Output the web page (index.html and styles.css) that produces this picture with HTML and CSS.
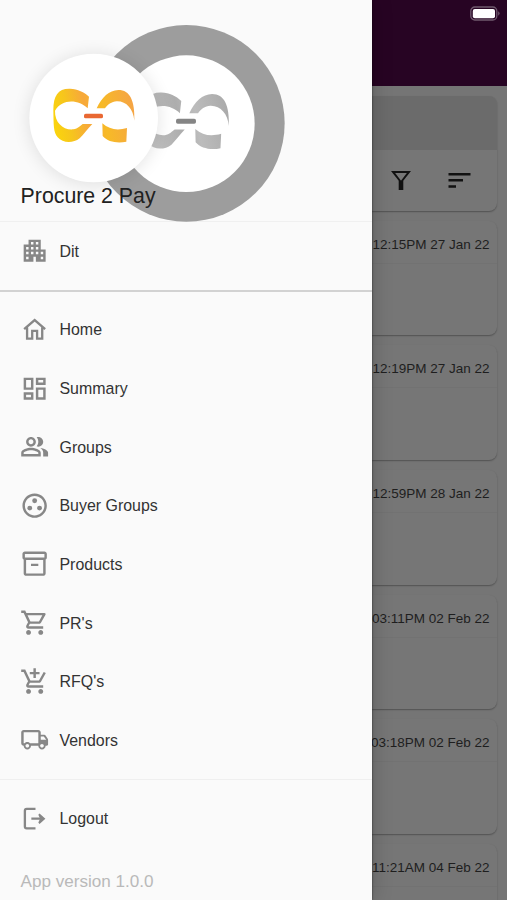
FILE: index.html
```html
<!DOCTYPE html>
<html lang="en">
<head>
<meta charset="utf-8">
<title>Procure 2 Pay</title>
<link rel="stylesheet" href="styles.css">
</head>
<body>
<div class="app">
  <aside class="drawer">
    <header class="brand">
      <svg class="brand-art" width="300" height="222" viewBox="0 0 900 666">
        <defs>
          <linearGradient id="gold" gradientUnits="userSpaceOnUse" x1="160" y1="380" x2="405" y2="330">
            <stop offset="0" stop-color="#fbd50c"/><stop offset=".2" stop-color="#f6c51d"/><stop offset=".42" stop-color="#f7a83b"/><stop offset=".62" stop-color="#f7ba27"/><stop offset="1" stop-color="#f5a445"/>
          </linearGradient>
          <linearGradient id="silver" gradientUnits="userSpaceOnUse" x1="160" y1="380" x2="405" y2="330">
            <stop offset="0" stop-color="#c6c6c6"/><stop offset=".42" stop-color="#adadad"/><stop offset=".62" stop-color="#bcbcbc"/><stop offset="1" stop-color="#aaa"/>
          </linearGradient>
          <filter id="soft" x="-40%" y="-40%" width="180%" height="180%"><feGaussianBlur stdDeviation="27"/></filter>
          <g id="ribbons">
            <path d="M160 330C160 287 174 265 210 266C234 267 252 276 267 290L263 325C237 299 187 294 165 332C164 368 190 391 220 388C234 386 241 377 248 372H277C261 389 251 403 239 415C219 431 188 430 173 412C160 397 161 375 160 330Z"/>
            <path d="M290 325C306 291 327 271 355 270C390 270 405 302 403 362C400 327 379 303 350 304C335 305 322 314 315 325Z"/>
            <path d="M307 370C328 389 353 392 381 384L379 425C353 431 323 426 308 408Z"/>
          </g>
        </defs>
        <circle cx="559" cy="370" r="295" fill="#9d9d9d"/>
        <circle cx="559" cy="371" r="205" fill="#fff"/>
        <g transform="translate(558 363) scale(1.05) translate(-280.5 -347.5)">
          <use href="#ribbons" fill="url(#silver)"/>
          <rect x="252" y="341" width="57" height="14" rx="5" fill="#858585"/>
        </g>
        <circle cx="281" cy="358" r="194" fill="#000" opacity=".11" filter="url(#soft)"/>
        <circle cx="281" cy="354" r="193" fill="#fff"/>
        <use href="#ribbons" fill="url(#gold)"/>
        <rect x="252" y="341" width="57" height="14" rx="5" fill="#e96832"/>
      </svg>
      <h1 class="brand-name">Procure 2 Pay</h1>
    </header>
    <div class="company">
      <a class="item"><svg class="icon" viewBox="0 0 24 24"><path d="M17 11V3H7v4H3v14h8v-4h2v4h8V11h-4zM7 19H5v-2h2v2zm0-4H5v-2h2v2zm0-4H5V9h2v2zm4 4H9v-2h2v2zm0-4H9V9h2v2zm0-4H9V5h2v2zm4 8h-2v-2h2v2zm0-4h-2V9h2v2zm0-4h-2V5h2v2zm4 12h-2v-2h2v2zm0-4h-2v-2h2v2z"/></svg><span>Dit</span></a>
    </div>
    <nav class="menu">
      <a class="item"><svg class="icon line" viewBox="0 0 24 24"><path d="M3.400 11.600L12 4.200l8.600 7.400M5.800 10.200V19.300H10V13H14V19.300H18.200V10.200"/></svg><span>Home</span></a>
      <a class="item"><svg class="icon" viewBox="0 0 24 24"><path d="M19 5v2h-4V5h4M9 5v6H5V5h4m10 8v6h-4v-6h4M9 17v2H5v-2h4M21 3h-8v6h8V3zM11 3H3v10h8V3zm10 8h-8v10h8V11zm-10 4H3v6h8v-6z"/></svg><span>Summary</span></a>
      <a class="item"><svg class="icon" viewBox="0 0 24 24"><path d="M9 12c2.210 0 4-1.790 4-4s-1.790-4-4-4-4 1.790-4 4 1.790 4 4 4zm0-6c1.100 0 2 .9 2 2s-.9 2-2 2-2-.9-2-2 .9-2 2-2zM9 13c-2.670 0-8 1.340-8 4v3h16v-3c0-2.660-5.330-4-8-4zm6 5H3v-.99c.2-.72 3.300-2.010 6-2.010s5.800 1.290 6 2v1zM15 12c2.210 0 4-1.790 4-4s-1.790-4-4-4c-.47 0-.91.1-1.330.24C14.500 5.270 15 6.580 15 8s-.5 2.730-1.330 3.760c.42.14.86.24 1.330.24zM16.670 13.130C18.040 14.060 19 15.320 19 17v3h4v-3c0-2.180-3.570-3.470-6.330-3.870z"/></svg><span>Groups</span></a>
      <a class="item"><svg class="icon" viewBox="0 0 24 24"><path d="M12 2C6.480 2 2 6.480 2 12s4.480 10 10 10 10-4.480 10-10S17.520 2 12 2zm0 18c-4.410 0-8-3.590-8-8s3.590-8 8-8 8 3.590 8 8-3.590 8-8 8z"/><circle cx="8" cy="14" r="2"/><circle cx="12" cy="8" r="2"/><circle cx="16" cy="14" r="2"/></svg><span>Buyer Groups</span></a>
      <a class="item"><svg class="icon" viewBox="0 0 24 24"><path d="M20 2H4c-1 0-2 .9-2 2v3.010c0 .72.43 1.340 1 1.690V20c0 1.100 1.100 2 2 2h14c.9 0 2-.9 2-2V8.700c.57-.35 1-.97 1-1.690V4c0-1.100-1-2-2-2zm-1 18H5V9h14v11zm1-13H4V4h16v3zM9 12h6v2H9z"/></svg><span>Products</span></a>
      <a class="item"><svg class="icon" viewBox="0 0 24 24"><path d="M15.550 13c.75 0 1.410-.41 1.750-1.030l3.580-6.490c.37-.66-.11-1.480-.87-1.480H5.210l-.94-2H1v2h2l3.600 7.590-1.350 2.440C4.520 15.370 5.480 17 7 17h12v-2H7l1.100-2h7.450zM6.160 6h12.150l-2.760 5H8.530L6.160 6zM7 18c-1.100 0-1.990.9-1.990 2S5.900 22 7 22s2-.9 2-2-.9-2-2-2zm10 0c-1.100 0-1.990.9-1.990 2s.89 2 1.990 2 2-.9 2-2-.9-2-2-2z"/></svg><span>PR's</span></a>
      <a class="item"><svg class="icon" viewBox="0 0 24 24"><path d="M11 9h2V6h3V4h-3V1h-2v3H8v2h3v3zm-4 9c-1.100 0-1.990.9-1.990 2S5.900 22 7 22s2-.9 2-2-.9-2-2-2zm10 0c-1.100 0-1.990.9-1.990 2s.89 2 1.990 2 2-.9 2-2-.9-2-2-2zm-8.900-5h7.450c.75 0 1.410-.41 1.750-1.030l3.860-7.010L19.420 4l-3.870 7H8.530L4.270 2H1v2h2l3.600 7.590-1.350 2.440C4.520 15.370 5.480 17 7 17h12v-2H7l1.100-2z"/></svg><span>RFQ's</span></a>
      <a class="item"><svg class="icon" viewBox="0 0 24 24"><path fill-rule="evenodd" d="M20 8h-3V6c0-1.100-.9-2-2-2H3c-1.100 0-2 .9-2 2v9c0 1.100.9 2 2 2 0 1.660 1.340 3 3 3s3-1.340 3-3h6c0 1.660 1.340 3 3 3s3-1.340 3-3h1c.55 0 1-.45 1-1v-3.670c0-.43-.14-.85-.4-1.200L20.800 8.400C20.600 8.150 20.300 8 20 8zM6 18.500c-.83 0-1.500-.67-1.500-1.500s.67-1.500 1.500-1.500 1.500.67 1.500 1.500-.67 1.500-1.500 1.500zm9-3.500H8.220c-.55-.61-1.330-1-2.220-1s-1.670.39-2.220 1H3V6h12v9zm3 3.500c-.83 0-1.500-.67-1.500-1.500s.67-1.500 1.500-1.500 1.500.67 1.500 1.500-.67 1.500-1.500 1.500zM17 12V9.500h2.500l1.960 2.500H17z"/></svg><span>Vendors</span></a>
    </nav>
    <div class="session">
      <a class="item"><svg class="icon line" viewBox="0 0 24 24"><path d="M12.700 4H5.500Q4 4 4 5.500V18.500Q4 20 5.500 20H12.700M9.300 12H18"/><path class="head" d="M16 7.700L20.800 12L16 16.300L15 15.200L16.500 12L15 8.800Z"/></svg><span>Logout</span></a>
    </div>
    <p class="version">App version 1.0.0</p>
  </aside>
  <main class="page">
    <header class="topbar">
      <svg width="30" height="16" viewBox="0 0 30 16"><rect x=".8" y="1" width="26" height="13" rx="4" fill="none" stroke="#705a6e" stroke-width="1.300"/><rect x="2.800" y="3" width="22.200" height="9.200" rx="2" fill="#fff"/><path d="M28.200 5.300Q31 7.500 28.200 9.700Z" fill="#705a6e"/></svg>
    </header>
    <div class="content">
      <section class="card tools">
        <div class="search"></div>
        <div class="actions">
          <svg width="20" height="22" viewBox="0 0 20 22"><path d="M2 2.900H18L11.300 11.500V20H8.700V11.500Z" fill="none" stroke="#111" stroke-width="2"/><path d="M8 11.500h4v9.500H8z" fill="#111"/></svg>
          <svg width="23" height="18" viewBox="0 0 23 18"><path d="M.5 3.300H22.500M.5 9.300H15M.5 15.500H8" stroke="#111" stroke-width="2.400"/></svg>
        </div>
      </section>
      <section class="card"><time class="date">12:15PM 27 Jan 22</time></section>
      <section class="card"><time class="date">12:19PM 27 Jan 22</time></section>
      <section class="card"><time class="date">12:59PM 28 Jan 22</time></section>
      <section class="card"><time class="date">03:11PM 02 Feb 22</time></section>
      <section class="card"><time class="date">03:18PM 02 Feb 22</time></section>
      <section class="card"><time class="date">11:21AM 04 Feb 22</time></section>
    </div>
  </main>
</div>
</body>
</html>
```
FILE: styles.css
```css
* { box-sizing: border-box; }
body { margin: 0; font-family: "Liberation Sans", Arial, sans-serif; }
.app { display: flex; width: 507px; height: 900px; overflow: hidden; background: #757575; }

.drawer {
  width: 372.400px;
  flex: none;
  background: #fafafa;
  z-index: 1;
  box-shadow: 0 0 2px rgba(0, 0, 0, .6), 0 0 20px rgba(0, 0, 0, .2);
}
.brand { height: 222px; border-bottom: 1px solid #f0f0f0; display: grid; }
.brand-art, .brand-name { grid-area: 1 / 1; }
.brand-art { display: block; }
.brand-name {
  align-self: end;
  margin: 0 0 13.500px 20.600px;
  font-size: 21.300px;
  line-height: 26px;
  font-weight: 400;
  color: #212121;
  z-index: 1;
}
.item {
  display: flex;
  align-items: center;
  height: 58.650px;
  padding-left: 20.400px;
  gap: 9.800px;
  font-size: 15.950px;
  color: #333;
}
.item span { padding-top: 1.600px; }
.icon { width: 29.300px; height: 29.300px; fill: #878787; flex: none; }
.line { fill: none; stroke: #878787; stroke-width: 1.900; }
.line .head { fill: #878787; stroke: none; }
.company { height: 69.500px; border-bottom: 2px solid #d2d2d2; }
.company .item { height: 58px; }
.menu { padding-top: 8.700px; height: 488px; border-bottom: 1px solid #efefef; }
.session { padding-top: 9.500px; }
.version { margin: 24px 0 0 20.500px; font-size: 17.100px; line-height: 20px; color: #b9b9b9; }

.page { flex: 1; min-width: 0; }
.topbar { height: 86px; background: #270423; display: flex; justify-content: flex-end; padding: 5.500px 7px 0 0; }
.content { padding: 10px 10px 0 0; display: flex; flex-direction: column; gap: 10px; }
.card {
  height: 114.700px;
  flex: none;
  background: #767676;
  border-radius: 0 8px 8px 0;
  box-shadow: 0 1px 1.500px rgba(0, 0, 0, .3);
  display: flex;
  flex-direction: column;
  align-items: flex-end;
}
.tools { align-items: stretch; overflow: hidden; }
.search { height: 54px; background: #6b6b6b; }
.actions { flex: 1; display: flex; align-items: center; justify-content: flex-end; gap: 37px; padding-right: 26.500px; }
.date {
  height: 43px;
  line-height: 48px;
  padding-right: 7.500px;
  font-size: 13.500px;
  white-space: nowrap;
  color: #1e1e1e;
  border-bottom: 1px solid #727272;
}
```
